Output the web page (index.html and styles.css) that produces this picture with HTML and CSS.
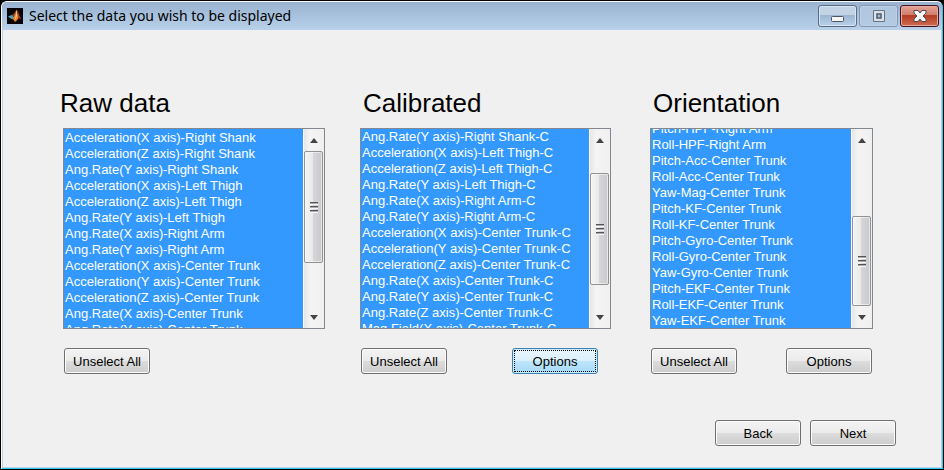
FILE: index.html
```html
<!DOCTYPE html>
<html lang="en">
<head>
<meta charset="utf-8">
<title>Select the data you wish to be displayed</title>
<link rel="stylesheet" href="styles.css">
</head>
<body>
<div class="window">
  <header class="titlebar">
    <svg class="app-icon" viewBox="0 0 16 16" aria-hidden="true">
      <rect width="16" height="16" fill="#080405"/>
      <path d="M1 8.6 5 6.8 7.2 9.2 5.2 11.2 3.6 10.4Z" fill="#4d9db5"/>
      <path d="M5 6.8C7 6.4 8 3.6 9.6 1.6L7.2 9.2Z" fill="#7a3a32"/>
      <path d="M9.6 1.4C8.4 4.4 7.6 8.4 5.2 11.2 6.6 11 7.2 12.4 8 14 9.6 13.4 10.4 11 11.6 10.4Z" fill="#f07a25"/>
      <path d="M9.6 1.4C9.2 5 8.8 8.8 7.4 12.6 9 10.8 9.8 9 10.4 7.6Z" fill="#fbd07c"/>
      <path d="M9.6 1.4C11.4 3.4 12.6 8.6 15 12.4 13.6 11.2 12.6 10.2 11.4 10.4Z" fill="#b5381d"/>
    </svg>
    <h1 class="title">Select the data you wish to be displayed</h1>
    <div class="window-controls">
      <button class="control" type="button" aria-label="Minimize">
        <svg viewBox="0 0 14 14"><rect x="0.5" y="7.5" width="12" height="5" rx="1" fill="#f6f6f6" stroke="#4c5568"/></svg>
      </button>
      <button class="control control--disabled" type="button" aria-label="Maximize" disabled>
        <svg viewBox="0 0 14 14"><path d="M1.5 1.5h11v11h-11z" fill="#dde1e6" stroke="#667488"/><path d="M5 5h4v4h-4z" fill="#a7bdd5" stroke="#4f5c70" stroke-width="1.500"/></svg>
      </button>
      <button class="control control--close" type="button" aria-label="Close">
        <svg viewBox="0 0 14 14"><path d="M1 1.500h4L7 4l2-2.500h4v2.500L10 7l3 3v2.500h-4L7 10l-2 2.500h-4V10l3-3-3-3z" fill="#f8f8f8" stroke="#504b57" stroke-linejoin="round"/></svg>
      </button>
    </div>
  </header>
  <main class="content">
    <div class="panels">
      <section class="panel panel--raw">
        <label class="heading" for="raw">Raw data</label>
        <div class="listbox">
          <select id="raw" class="list" multiple data-scroll="0">
            <option selected>Acceleration(X axis)-Right Shank</option>
            <option selected>Acceleration(Z axis)-Right Shank</option>
            <option selected>Ang.Rate(Y axis)-Right Shank</option>
            <option selected>Acceleration(X axis)-Left Thigh</option>
            <option selected>Acceleration(Z axis)-Left Thigh</option>
            <option selected>Ang.Rate(Y axis)-Left Thigh</option>
            <option selected>Ang.Rate(X axis)-Right Arm</option>
            <option selected>Ang.Rate(Y axis)-Right Arm</option>
            <option selected>Acceleration(X axis)-Center Trunk</option>
            <option selected>Acceleration(Y axis)-Center Trunk</option>
            <option selected>Acceleration(Z axis)-Center Trunk</option>
            <option selected>Ang.Rate(X axis)-Center Trunk</option>
            <option selected>Ang.Rate(Y axis)-Center Trunk</option>
          </select>
          <div class="scrollbar" aria-hidden="true">
            <span class="arrow arrow--up"></span>
            <div class="track track--raw"><div class="thumb"><span class="grip"></span></div></div>
            <span class="arrow arrow--down"></span>
          </div>
        </div>
        <div class="actions">
          <button class="button" type="button">Unselect All</button>
        </div>
      </section>
      <section class="panel panel--calibrated">
        <label class="heading" for="calibrated">Calibrated</label>
        <div class="listbox">
          <select id="calibrated" class="list" multiple data-scroll="1">
            <option selected>Ang.Rate(Y axis)-Right Shank-C</option>
            <option selected>Acceleration(X axis)-Left Thigh-C</option>
            <option selected>Acceleration(Z axis)-Left Thigh-C</option>
            <option selected>Ang.Rate(Y axis)-Left Thigh-C</option>
            <option selected>Ang.Rate(X axis)-Right Arm-C</option>
            <option selected>Ang.Rate(Y axis)-Right Arm-C</option>
            <option selected>Acceleration(X axis)-Center Trunk-C</option>
            <option selected>Acceleration(Y axis)-Center Trunk-C</option>
            <option selected>Acceleration(Z axis)-Center Trunk-C</option>
            <option selected>Ang.Rate(X axis)-Center Trunk-C</option>
            <option selected>Ang.Rate(Y axis)-Center Trunk-C</option>
            <option selected>Ang.Rate(Z axis)-Center Trunk-C</option>
            <option selected>Mag.Field(X axis)-Center Trunk-C</option>
          </select>
          <div class="scrollbar" aria-hidden="true">
            <span class="arrow arrow--up"></span>
            <div class="track track--calibrated"><div class="thumb"><span class="grip"></span></div></div>
            <span class="arrow arrow--down"></span>
          </div>
        </div>
        <div class="actions">
          <button class="button" type="button">Unselect All</button>
          <button class="button button--focused" type="button">Options</button>
        </div>
      </section>
      <section class="panel panel--orientation">
        <label class="heading" for="orientation">Orientation</label>
        <div class="listbox">
          <select id="orientation" class="list" multiple data-scroll="9">
            <option selected>Pitch-HPF-Right Arm</option>
            <option selected>Roll-HPF-Right Arm</option>
            <option selected>Pitch-Acc-Center Trunk</option>
            <option selected>Roll-Acc-Center Trunk</option>
            <option selected>Yaw-Mag-Center Trunk</option>
            <option selected>Pitch-KF-Center Trunk</option>
            <option selected>Roll-KF-Center Trunk</option>
            <option selected>Pitch-Gyro-Center Trunk</option>
            <option selected>Roll-Gyro-Center Trunk</option>
            <option selected>Yaw-Gyro-Center Trunk</option>
            <option selected>Pitch-EKF-Center Trunk</option>
            <option selected>Roll-EKF-Center Trunk</option>
            <option selected>Yaw-EKF-Center Trunk</option>
          </select>
          <div class="scrollbar" aria-hidden="true">
            <span class="arrow arrow--up"></span>
            <div class="track track--orientation"><div class="thumb"><span class="grip"></span></div></div>
            <span class="arrow arrow--down"></span>
          </div>
        </div>
        <div class="actions">
          <button class="button" type="button">Unselect All</button>
          <button class="button" type="button">Options</button>
        </div>
      </section>
    </div>
    <footer class="footer">
      <button class="button" type="button">Back</button>
      <button class="button" type="button">Next</button>
    </footer>
  </main>
</div>
<script src="lists.js"></script>
</body>
</html>
```
FILE: lists.js
```js
function placeLists() {
  for (const list of document.querySelectorAll(".list")) {
    list.scrollTop = Number(list.dataset.scroll);
  }
}
placeLists();
window.addEventListener("load", () => requestAnimationFrame(placeLists));
```
FILE: styles.css
```css
* {
  box-sizing: border-box;
}

body {
  margin: 0;
  padding: 1px;
  min-height: 100vh;
  display: flex;
  background: #000;
  color: #000;
  font-family: "Liberation Sans", Arial, sans-serif;
  font-size: 13px;
}

.window {
  flex: 1;
  display: flex;
  flex-direction: column;
  border: 1px solid #fff;
  border-right-color: #2fc9ee;
  border-bottom-color: #2fc9ee;
  border-radius: 6px 6px 0 0;
  background: #b9d1ea;
  overflow: hidden;
}

.titlebar {
  display: flex;
  align-items: center;
  height: 28px;
  padding: 0 3px 0 5px;
  background: linear-gradient(#98b2d0, #b9d1ea);
}

.app-icon {
  width: 16px;
  height: 16px;
}

.title {
  flex: 1;
  margin: 0 0 0 6px;
  font: 14px/20px "Noto Sans", "Open Sans", sans-serif;
}

.window-controls {
  display: flex;
  gap: 2px;
  align-self: flex-start;
  padding-top: 3px;
}

.control {
  display: flex;
  align-items: center;
  justify-content: center;
  width: 39px;
  height: 22px;
  padding: 0;
  border: 1px solid #5b6b84;
  border-radius: 3px;
  background: linear-gradient(#c3d3e6 0 45%, #9bb5d1 45%, #b9d0e8);
  box-shadow: inset 0 0 0 1px #d8e5f3;
}

.control svg {
  flex: none;
  width: 14px;
  height: 14px;
}

.control--disabled {
  border-color: #8398b3;
  background: linear-gradient(#b0c6de, #b4cbe4);
  box-shadow: inset 0 0 0 1px #bed1e6;
}

.control--close {
  border-color: #43101c;
  background: linear-gradient(#e4a496, #cf7c6c 45%, #b53a22 45%, #cc6b50);
  box-shadow: inset 0 0 0 1px #e5aba0;
}

.content {
  flex: 1;
  margin: 0 1px 1px;
  padding: 56px 68px 21px 60px;
  background: #f0f0f0;
}

.panels {
  display: grid;
  grid-template-columns: 262fr 251fr 227fr;
  column-gap: 35px;
}

.panel {
  min-width: 0;
}

.panel--orientation {
  padding-left: 4px;
}

.heading {
  display: block;
  padding-left: 3px;
  font-size: 26px;
  line-height: 34px;
  margin-bottom: 8px;
}

.panel--raw .heading {
  margin-left: -6px;
}

.listbox {
  display: flex;
  height: 201px;
  border: 1px solid #828790;
  background: #fff;
}

.list {
  flex: 1;
  min-width: 0;
  height: 100%;
  margin: 0;
  padding: 1px 0 0;
  border: 0;
  border-radius: 0;
  outline: 0;
  background: #39f;
  color: #fff;
  font: 13px/16px "Liberation Sans", Arial, sans-serif;
  overflow-y: scroll;
  scrollbar-width: none;
}

.list option {
  min-height: 16px;
  padding: 0 1px;
  line-height: 16px;
}

.list option:checked {
  background: #39f linear-gradient(#39f, #39f);
  color: #fff;
}

.scrollbar {
  display: flex;
  flex-direction: column;
  width: 20px;
  margin-left: 1px;
  padding-right: 1px;
  background: linear-gradient(90deg, #e6e6e6, #f4f4f4 30%, #f0f0f0);
}

.arrow {
  display: flex;
  align-items: center;
  justify-content: center;
  height: 22px;
}

.arrow::before {
  content: "";
  border: solid transparent;
  border-width: 0 4px;
}

.arrow--up::before {
  border-bottom: 5px solid #444;
}

.arrow--down::before {
  border-top: 5px solid #444;
}

.track {
  flex: 1;
  display: flex;
}

.track--raw {
  padding-bottom: 43px;
}

.track--calibrated {
  padding: 22px 0 21px;
}

.track--orientation {
  padding-top: 65px;
}

.thumb {
  flex: 1;
  display: flex;
  align-items: center;
  justify-content: center;
  border: 1px solid #929292;
  border-radius: 2px;
  background: linear-gradient(90deg, #f5f5f5, #e9e9e9 45%, #d6d6d9 50%, #c8c9cd);
  box-shadow: inset 0 0 0 1px #fafafa99;
}

.grip {
  width: 8px;
  height: 11px;
  background: repeating-linear-gradient(#555 0 1px, #aaa 1px 2px, #f8f8f8 2px 3px, transparent 3px 4px);
}

.actions {
  display: flex;
  justify-content: space-between;
  margin-top: 19px;
  padding: 0 1px;
}

.panel--calibrated .actions {
  padding-right: 13px;
}

.button {
  width: 86px;
  height: 26px;
  padding: 2px 0 0;
  border: 1px solid #707070;
  border-radius: 3px;
  background: linear-gradient(#f3f3f3, #ebebeb 50%, #dcdcdc 50%, #cdcdcd);
  box-shadow: inset 0 0 0 1px #fbfbfb;
  color: #000;
  font: 13px/16px "Liberation Sans", Arial, sans-serif;
}

.button--focused {
  border-color: #3c7fb1;
  background: linear-gradient(#eaf6fd, #d9f0fc 50%, #bee6fd 50%, #a7d9f5);
  box-shadow: inset 0 0 0 1px #c8effb;
  outline: 1px dotted #000;
  outline-offset: -3px;
}

.footer {
  display: flex;
  justify-content: flex-end;
  gap: 9px;
  margin-top: 46px;
  margin-right: -23px;
}
```
